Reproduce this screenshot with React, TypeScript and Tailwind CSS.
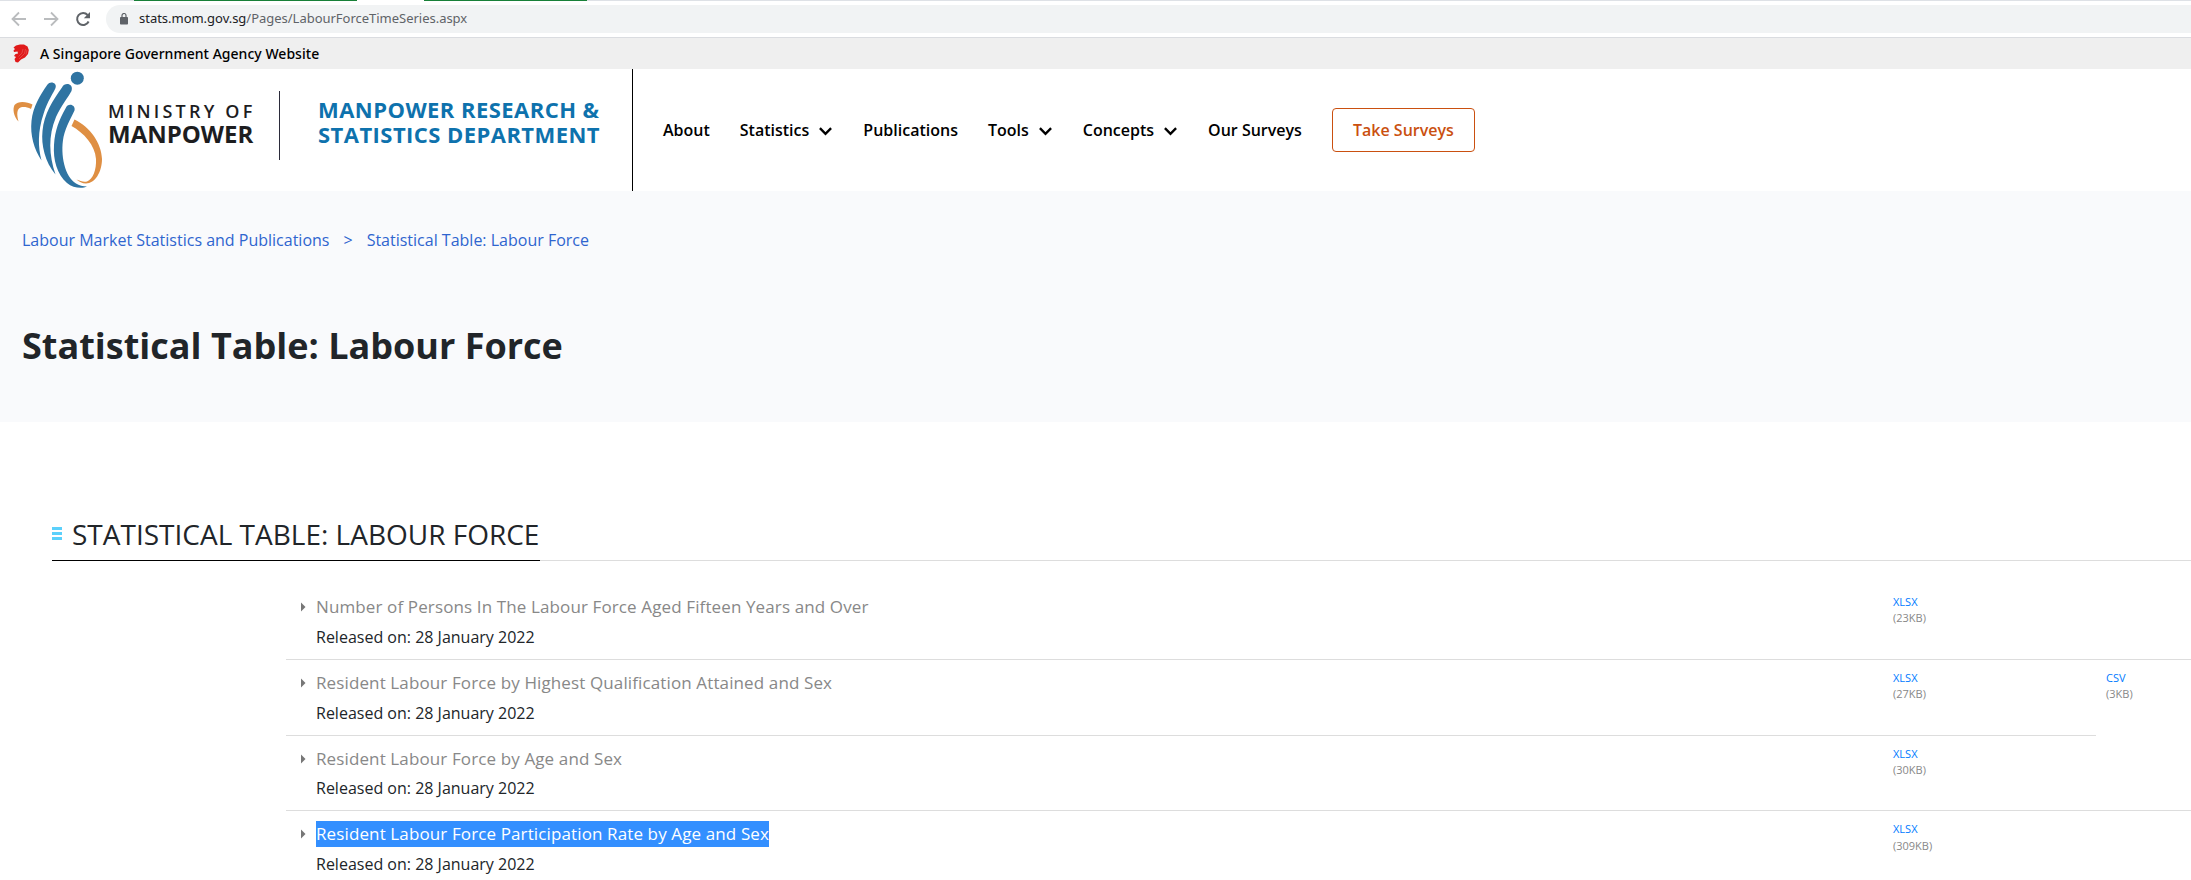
import React from "react";

const rows = [
  { title: "Number of Persons In The Labour Force Aged Fifteen Years and Over", xlsx: "(23KB)" },
  { title: "Resident Labour Force by Highest Qualification Attained and Sex", xlsx: "(27KB)", csv: "(3KB)" },
  { title: "Resident Labour Force by Age and Sex", xlsx: "(30KB)" },
  { title: "Resident Labour Force Participation Rate by Age and Sex", xlsx: "(309KB)", selected: true },
];
const rowHeights = ["h-[76px]", "h-[76px]", "h-[75px]", "h-[76px]"];
const releasedGaps = ["mt-[5px]", "mt-[5px]", "mt-1", "mt-[5px]"];

function Chevron() {
  return (
    <svg className="ml-[10px] mr-px mt-[3px]" width="13" height="9" viewBox="0 0 13 9" fill="none" stroke="#000" strokeWidth="2.4">
      <path d="M0.9 1.2 L6.5 6.8 L12.1 1.2" />
    </svg>
  );
}

function MomLogo() {
  return (
    <svg width="104" height="122" viewBox="0 0 104 122">
      <g fill="#2f74a2">
        <circle cx="77.3" cy="9.2" r="6.5" />
        <path d="M47.5 15.5 C50 11.5 57.500 13.5 55.5 19 C54 23 47.500 32 43.5 45 C37.500 63 38 78 41.5 91.500 C34 80 30 66 31.500 52 C33 38 40 26 47.500 15.500Z" />
        <path d="M62 18.500 C65 12.500 74 15 71.500 22 C69 27 61 37 56 48 C48 67 49 86 55.500 105.500 C45 93 41 76 42.500 62 C44 45 53 31 62 18.500Z" />
        <path d="M65.500 39.500 C68 33 76 36 74.500 41.500 C72 47 66 57 63.500 68 C60 86 65 108 76 114.500 C79 116.500 83 117.500 87 117.500 C82 120 73 119 67 114 C57 105 53 91 54 76 C55 61 59 51 65.500 39.500Z" />
      </g>
      <g fill="#df8f43">
        <path d="M32.500 35.500 C27 32.500 18 31.500 14.500 36 C12.500 40 13.500 47 18.500 52.500 C16.500 45 17 40 20.500 38.500 C23.500 37.500 27 38 31 40Z" />
        <path d="M74.500 50.500 C90 58 101.500 74 102 90 C102 103 95 114.500 86 114.500 C82 114.500 79 112.500 76.500 110.500 C80 112 84 113.500 87 112.500 C93 110 96.500 101 96 90 C95 76 84 64 71.500 57Z" />
      </g>
    </svg>
  );
}

function BrowserBar() {
  return (
    <div className="flex h-[38px] flex-col border-b border-[#dadce0] bg-white">
      <div className="flex h-px shrink-0">
        <div className="w-[134px] bg-[#dee1e6]" />
        <div className="w-[223px] bg-[#188038]" />
        <div className="w-[67px] bg-white" />
        <div className="w-[163px] bg-[#188038]" />
        <div className="flex-1 bg-[#dee1e6]" />
      </div>
      <div className="flex items-center pt-1">
        <svg className="ml-[11px]" width="16" height="16" viewBox="0 0 16 16" fill="none" stroke="#babcbe" strokeWidth="1.8">
          <path d="M15 8H2 M8 1.500L1.500 8L8 14.500" />
        </svg>
        <svg className="ml-4" width="16" height="16" viewBox="0 0 16 16" fill="none" stroke="#babcbe" strokeWidth="1.8">
          <path d="M1 8H14 M8 1.500L14.500 8L8 14.500" />
        </svg>
        <svg className="ml-4" width="16" height="16" viewBox="0 0 16 16">
          <path d="M13.600 10.500A6 6 0 1 1 12.600 4" fill="none" stroke="#5f6368" strokeWidth="2" />
          <path d="M15 1V7.200H8.800Z" fill="#5f6368" />
        </svg>
        <div className="ml-[15px] flex h-7 flex-1 items-center rounded-l-full bg-[#f1f3f4] pl-[14px]">
          <svg width="8" height="12" viewBox="0 0 8 12">
            <rect y="4" width="8" height="7.500" rx="0.800" fill="#5f6368" />
            <path d="M2 5V2.500a2 2 0 0 1 4 0V5" fill="none" stroke="#5f6368" strokeWidth="1.200" />
          </svg>
          <div className="ml-[11px] font-['Noto_Sans',sans-serif] text-[13px] tracking-[-0.02px] text-[#5f6368]">
            <span className="text-[#202124]">stats.mom.gov.sg</span>/Pages/LabourForceTimeSeries.aspx
          </div>
        </div>
      </div>
    </div>
  );
}

function GovBar() {
  return (
    <div className="flex h-[31px] items-center bg-[#efefef] pl-[13px]">
      <svg className="-mt-px" width="16" height="19" viewBox="0 0 16 19">
        <path d="M0.500 3.500L3 1.500L7 0.500L11 0.500L14.500 2.500L15.800 6L15 10L12 13.500L8 15.500L5 18.500L2.500 18L1.500 15L3 13L1 12L2.500 10L5 9.500L4.500 7.500L1 8L0.500 6.500L2 5Z" fill="#e01a1a" />
        <path d="M6 15L11.500 9.500L12.500 5M5.500 12.500L9 9L10 5M14 6L13 10.500" fill="none" stroke="#e86a6a" strokeWidth="0.500" />
      </svg>
      <div className="ml-[11px] font-['Noto_Sans',sans-serif] text-[14px] font-medium tracking-[0.03px] text-black">A Singapore Government Agency Website</div>
    </div>
  );
}

function Header() {
  return (
    <div className="flex h-[122px] bg-white">
      <div className="flex w-[633px] border-r border-black">
        <MomLogo />
        <div className="ml-1 mt-[31px] w-[150px] whitespace-nowrap text-[#1d1d1f]">
          <div className="text-[18px] font-semibold leading-[23px] tracking-[3.2px]">MINISTRY OF</div>
          <div className="text-[24px] font-bold leading-[22px]">MANPOWER</div>
        </div>
        <div className="ml-[21px] mt-[22px] h-[69px] w-px bg-[#2b2b3a]" />
        <div className="ml-[38px] mt-[28px] whitespace-nowrap text-[22px] font-bold leading-[25px] tracking-[0.45px] text-[#0e72ad]">
          MANPOWER RESEARCH &amp;
          <br />
          STATISTICS DEPARTMENT
        </div>
      </div>
      <nav className="flex items-center gap-[30px] pl-[30px] text-[16px] font-semibold text-black">
        <span>About</span>
        <span className="flex items-center">Statistics<Chevron /></span>
        <span>Publications</span>
        <span className="flex items-center">Tools<Chevron /></span>
        <span className="flex items-center">Concepts<Chevron /></span>
        <span>Our Surveys</span>
        <span className="flex h-11 w-[143px] items-center justify-center rounded border border-[#ca5010] text-[#ca5010]">Take Surveys</span>
      </nav>
    </div>
  );
}

function FileLink({ kind, size, loose }: { kind: string; size: string; loose?: boolean }) {
  return (
    <div className="text-[11px] leading-4 text-[#888]">
      <div className="text-[#007bff]">{kind}</div>
      <div className={loose ? "mt-px" : ""}>{size}</div>
    </div>
  );
}

export default function App() {
  return (
    <div className="h-[880px] w-[2191px] overflow-hidden bg-white font-['Open_Sans',sans-serif]">
      <BrowserBar />
      <GovBar />
      <Header />
      <div className="h-[231px] bg-[#f9fafc] pl-[22px] pt-[37px]">
        <div className="flex gap-[14px] text-[16px] leading-6 text-[#2f65cf]">
          <span>Labour Market Statistics and Publications</span>
          <span>&gt;</span>
          <span>Statistical Table: Labour Force</span>
        </div>
        <h1 className="mt-[70px] text-[36px] font-bold leading-[48px] text-[#212529]">Statistical Table: Labour Force</h1>
      </div>
      <div className="ml-[52px] mt-[90px] flex h-[49px] border-b border-[#ddd]">
        <div className="flex h-[49px] w-[488px] items-start border-b border-black">
          <div className="mt-[15px] flex w-[10px] flex-col gap-[2px]">
            <div className="h-[3px] bg-[#5bd0fb]" />
            <div className="h-[3px] bg-[#5bd0fb]" />
            <div className="h-[3px] bg-[#5bd0fb]" />
          </div>
          <h2 className="ml-[10px] whitespace-nowrap text-[28px] leading-[44px] text-[#212529]">STATISTICAL TABLE: LABOUR FORCE</h2>
        </div>
      </div>
      <div className="ml-[286px] mt-[23px]">
        {rows.map((row, i) => (
          <div key={row.title} className={`flex ${rowHeights[i]}`}>
            <div className={`flex border-b border-[#ddd] ${row.csv ? "w-[1810px]" : "w-full"}`}>
              <svg className="ml-[15px] mt-[18px]" width="5" height="10" viewBox="0 0 5 10" fill="#777">
                <path d="M0 0.500L4.500 5L0 9.500Z" />
              </svg>
              <div className="ml-[10px] w-[1577px] pt-[10px]">
                <div className="flex h-[26px]">
                  <span className={`text-[17px] leading-[26px] tracking-[0.12px] ${row.selected ? "bg-[#338fff] text-white" : "text-[#888]"}`}>{row.title}</span>
                </div>
                <div className={`text-[16px] leading-6 text-[#212529] ${releasedGaps[i]}`}>Released on: 28 January 2022</div>
              </div>
              <div className="pt-[10px]"><FileLink kind="XLSX" size={row.xlsx} loose={row.selected} /></div>
            </div>
            {row.csv && <div className="ml-[10px] pt-[10px]"><FileLink kind="CSV" size={row.csv} /></div>}
          </div>
        ))}
      </div>
    </div>
  );
}
